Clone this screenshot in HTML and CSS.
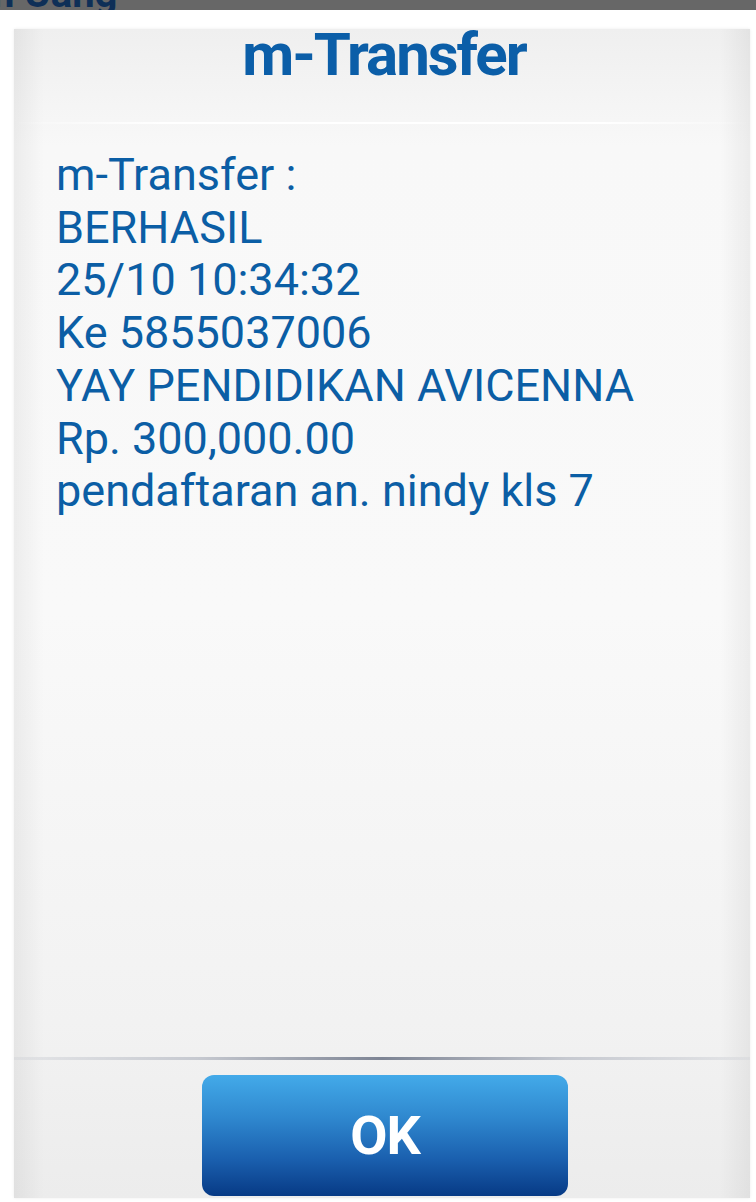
FILE: index.html
```html
<!DOCTYPE html>
<html>
<head>
<meta charset="utf-8">
<link rel="stylesheet" href="styles.css">
</head>
<body>
<div class="topbar"><span class="topbar-text">n Uang</span></div>
<div class="dialog">
  <div class="dialog-title">m-Transfer</div>
  <div class="dialog-rule"></div>
  <div class="dialog-body">
    <div class="line">m-Transfer :</div>
    <div class="line">BERHASIL</div>
    <div class="line">25/10 10:34:32</div>
    <div class="line">Ke 5855037006</div>
    <div class="line">YAY PENDIDIKAN AVICENNA</div>
    <div class="line">Rp. 300,000.00</div>
    <div class="line">pendaftaran an. nindy kls 7</div>
  </div>
  <div class="dialog-sep"></div>
  <div class="dialog-actions">
    <div class="ok-btn"><span class="ok-text">OK</span></div>
  </div>
</div>
</body>
</html>
```

FILE: styles.css
```css
html, body {
  margin: 0;
  padding: 0;
  background: #ffffff;
  width: 756px;
  height: 1202px;
  overflow: hidden;
  font-family: Roboto, "Noto Sans", sans-serif;
}

.topbar {
  height: 10px;
  background: #676767;
  overflow: hidden;
}

.topbar-text {
  display: block;
  margin-top: -26px;
  margin-left: -8px;
  font-family: Roboto, sans-serif;
  font-weight: 700;
  font-size: 40px;
  line-height: 40px;
  color: #0e2f57;
  white-space: nowrap;
}

.dialog {
  margin: 19px 6px 0 14px;
  height: 1169px;
  display: flex;
  flex-direction: column;
  background:
    linear-gradient(to right, rgba(0,0,0,0.05) 0, rgba(0,0,0,0) 30px, rgba(0,0,0,0) calc(100% - 30px), rgba(0,0,0,0.05) 100%),
    linear-gradient(to bottom, #efefef 0, #f8f8f8 10%, #f9f9f9 50%, #f2f2f2 85%, #ececec 100%);
  box-shadow: 0 0 3px rgba(0,0,0,0.08);
}

.dialog-title {
  height: 93px;
  box-sizing: border-box;
  text-align: center;
  font-family: Roboto, sans-serif;
  font-weight: 700;
  font-size: 60px;
  line-height: 52px;
  color: #0b5ea8;
  letter-spacing: -2px;
  padding-left: 4px;
}

.dialog-rule {
  height: 2px;
  background: linear-gradient(to right, rgba(255,255,255,0), #ffffff 20%, #ffffff 80%, rgba(255,255,255,0));
}

.dialog-body {
  flex: 1;
  padding: 25px 0 0 42px;
  color: #0b5ea5;
  font-family: Roboto, sans-serif;
  font-size: 45px;
  line-height: 52.7px;
  white-space: nowrap;
}

.dialog-sep {
  height: 3px;
  background: linear-gradient(to right, rgba(200,203,210,0.3), #c6c9d0 25%, #7d8494 50%, #c6c9d0 75%, rgba(200,203,210,0.3));
}

.dialog-actions {
  height: 138px;
  display: flex;
  justify-content: center;
  padding-top: 15px;
  padding-left: 6px;
  box-sizing: border-box;
}

.ok-btn {
  width: 366px;
  height: 121px;
  border-radius: 12px;
  background: linear-gradient(to bottom, #43aae9 0, #2f88cf 35%, #1a5fae 70%, #073a85 100%);
  display: flex;
  align-items: center;
  justify-content: center;
}

.ok-text {
  color: #ffffff;
  font-family: Roboto, sans-serif;
  font-weight: 700;
  font-size: 54px;
  line-height: 54px;
  letter-spacing: -1px;
}
```
